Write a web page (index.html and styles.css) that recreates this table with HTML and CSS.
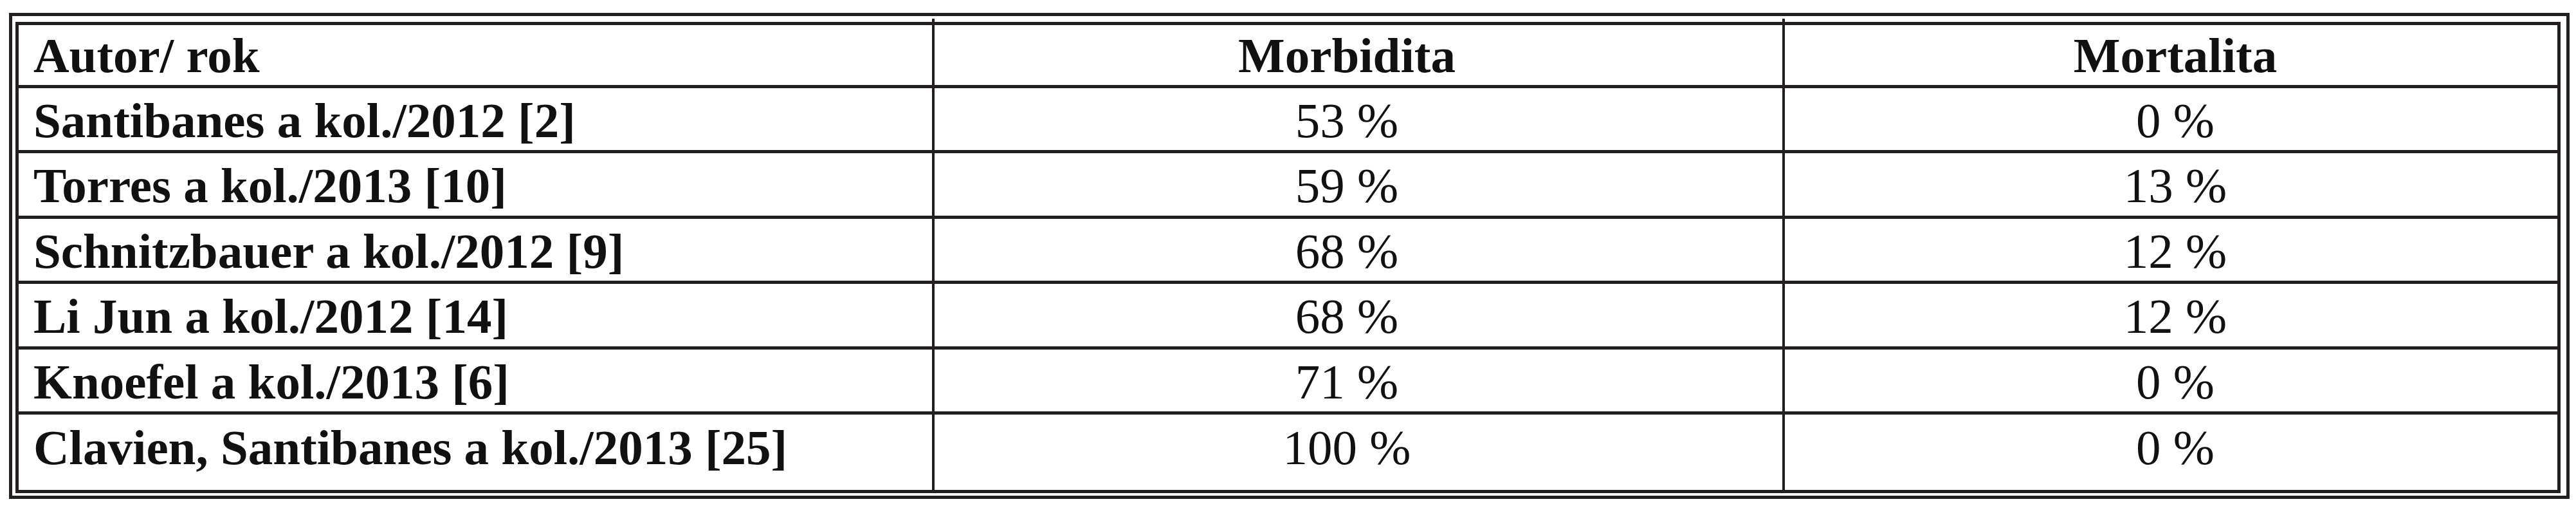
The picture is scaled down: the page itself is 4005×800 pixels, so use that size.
FILE: index.html
```html
<!DOCTYPE html>
<html lang="cs">
<head>
<meta charset="utf-8">
<title>Morbidita a mortalita</title>
<link rel="stylesheet" href="styles.css">
</head>
<body>
<div class="frame">
  <table class="data">
    <thead>
      <tr>
        <th class="c1">Autor/ rok</th>
        <th class="c2">Morbidita</th>
        <th class="c3">Mortalita</th>
      </tr>
    </thead>
    <tbody>
      <tr><td class="c1">Santibanes a kol./2012 [2]</td><td class="c2">53 %</td><td class="c3">0 %</td></tr>
      <tr><td class="c1">Torres a kol./2013 [10]</td><td class="c2">59 %</td><td class="c3">13 %</td></tr>
      <tr><td class="c1">Schnitzbauer a kol./2012 [9]</td><td class="c2">68 %</td><td class="c3">12 %</td></tr>
      <tr><td class="c1">Li Jun a kol./2012 [14]</td><td class="c2">68 %</td><td class="c3">12 %</td></tr>
      <tr><td class="c1">Knoefel a kol./2013 [6]</td><td class="c2">71 %</td><td class="c3">0 %</td></tr>
      <tr class="last"><td class="c1">Clavien, Santibanes a kol./2013 [25]</td><td class="c2">100 %</td><td class="c3">0 %</td></tr>
    </tbody>
  </table>
</div>
</body>
</html>
```

FILE: styles.css
```css
html, body {
  margin: 0;
  padding: 0;
  background: #ffffff;
}

body {
  padding: 20px 0 0 14px;
  font-family: "Liberation Serif", "Times New Roman", serif;
  color: #111111;
}

.frame {
  width: 3957px;
  border: 5px solid #231f20;
  padding: 9px 9px 4px 5px;
}

.data {
  width: 3957px;
  border-collapse: separate;
  border-spacing: 0;
  border: 5px solid #231f20;
  table-layout: fixed;
  font-size: 77px;
  line-height: 80px;
}

.data th,
.data td {
  padding: 10px 0 0 0;
  height: 86.4px;
  vertical-align: top;
  box-sizing: content-box;
}

.data th {
  padding-top: 7px;
  height: 86px;
  font-weight: bold;
}

.data td {
  border-top: 5px solid #231f20;
  font-weight: normal;
}

.data .c1 {
  width: 1397px;
  padding-left: 23px;
  text-align: left;
  font-weight: bold;
}

.data .c2 {
  width: 1282px;
  padding-right: 36px;
  border-left: 4px solid #231f20;
  text-align: center;
  position: relative;
}

.data .c3 {
  width: 1188px;
  padding-left: 13px;
  border-left: 4px solid #231f20;
  text-align: center;
  position: relative;
}

.data th.c2::before,
.data th.c3::before {
  content: "";
  position: absolute;
  left: -4px;
  top: -10px;
  width: 4px;
  height: 5px;
  background: #231f20;
}

.data tr.last td {
  padding-top: 11px;
  height: 106px;
}
```
